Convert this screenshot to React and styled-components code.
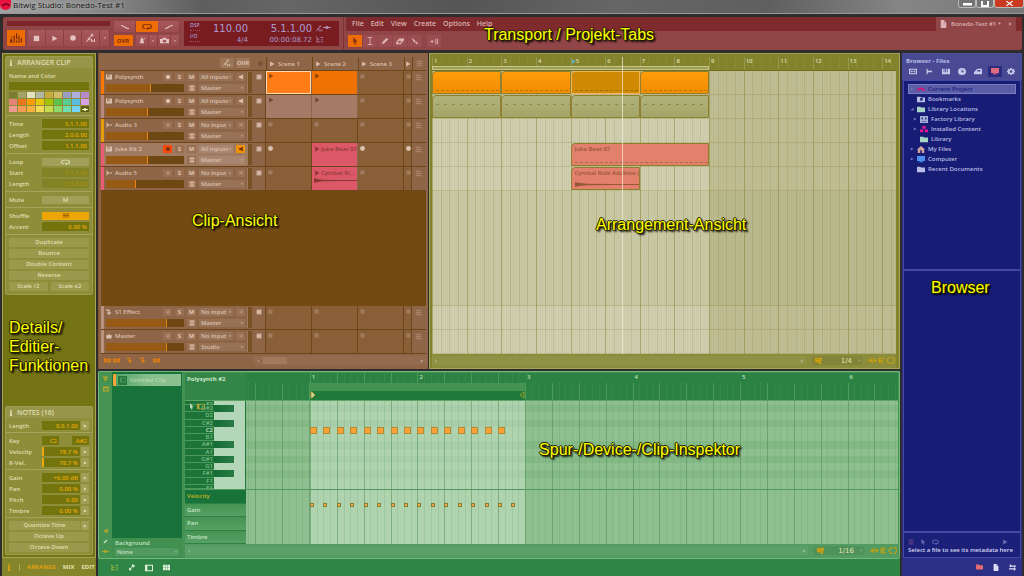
import React from "react";
import styled, { createGlobalStyle, css } from "styled-components";

const BARS = 13.4;

const swatches = [
  "#7c7c34", "#a3a267", "#e3e2c0", "#b0b5a4", "#c8a93c", "#d3bd68", "#999fc4", "#acaedd", "#b98acb",
  "#e5837a", "#e8761c", "#ff9c08", "#e8c80c", "#a4c408", "#5cc24a", "#5acb92", "#58bde0", "#d9a0e8",
  "#ef9b92", "#f79a54", "#fcb13e", "#f3d956", "#c5dc50", "#8bdb6c", "#72dcb0", "#72d3f4", "#5f5f10",
];

const tracks = [
  { name: "Polysynth", icon: "keys", color: "#ff7800", input: "All inputs", output: "Master", level: 58, live: true, clips: [{ color: "#ff7c16", selected: true }, { color: "#f07203" }, null] },
  { name: "Polysynth", icon: "keys", color: "#b98a7d", input: "All inputs", output: "Master", level: 54, live: true, clips: [{ color: "#a37b66" }, { color: "#a37b66" }, null] },
  { name: "Audio 3", icon: "wave", color: "#e69e08", input: "No input", output: "Master", level: 54, clips: [null, null, null] },
  { name: "Juke Kit 2", icon: "keys", color: "#ea5c74", input: "All inputs", output: "Master", level: 54, live: true, armed: true, clips: [null, { color: "#dc5868", name: "Juke Beat 07" }, null] },
  { name: "Audio 5", icon: "wave", color: "#ea5c74", input: "No input", output: "Master", level: 39, clips: [null, { color: "#dc5868", name: "Cymbal Ri...", wave: true }, null] },
];

const busTracks = [
  { name: "S1 Effect", icon: "fx", color: "#bb9180", input: "No input", output: "Master", level: 78, clips: [null, null, null] },
  { name: "Master", icon: "crown", color: "#bb9180", input: "No input", output: "Studio", level: 78, clips: [null, null, null] },
];

const lanes = [
  [
    { from: 1, to: 3, kind: "orange" },
    { from: 3, to: 5, kind: "orange" },
    { from: 5, to: 7, kind: "selected" },
    { from: 7, to: 9, kind: "orange" },
  ],
  [
    { from: 1, to: 3, kind: "olive" },
    { from: 3, to: 5, kind: "olive" },
    { from: 5, to: 7, kind: "olive" },
    { from: 7, to: 9, kind: "olive" },
  ],
  [],
  [{ from: 5, to: 9, kind: "red", name: "Juke Beat 07" }],
  [{ from: 5, to: 7, kind: "red", name: "Cymbal Ride Additive (", wave: true }],
];

const keys = ["E2", "D#2", "D2", "C#2", "C2", "B1", "A#1", "A1", "G#1", "G1", "F#1", "F1", "E1"];

const tree = [
  { name: "Current Project", icon: "project", color: "#d3147c", arrow: "closed", selected: true },
  { name: "Bookmarks", icon: "bookmark", color: "#b9bde6" },
  { name: "Library Locations", icon: "folder", color: "#a8d5c5", arrow: "open" },
  { name: "Factory Library", icon: "factory", color: "#a4b0d8", arrow: "closed", deep: true },
  { name: "Installed Content", icon: "blocks", color: "#ec1596", arrow: "closed", deep: true },
  { name: "Library", icon: "folder", color: "#a8d5c5", deep: true },
  { name: "My Files", icon: "home", color: "#d4a59c", arrow: "closed" },
  { name: "Computer", icon: "screen", color: "#4e8ff0", arrow: "closed" },
  { name: "Recent Documents", icon: "folder", color: "#b9bde6" },
];

const glyphs = {
  stop: <rect x="2" y="2" width="6" height="6" />,
  play: <path d="M2 1l7 4-7 4z" />,
  record: <circle cx="5" cy="5" r="3.5" />,
  down: <path d="M2 3.5h6L5 7z" />,
  left: <path d="M7 2v6L3 5z" />,
  corner: <path d="M9 1v8H1z" />,
  minus: <rect x="0" y="4" width="10" height="5" />,
  keys: <path d="M0 1h2v5h1V1h1v5h1V1h1v5h1V1h1v5h0V1h2v8H0z" />,
  wave: <path d="M1 0l3 4h6v2H4l-3 4z" />,
  fx: <path d="M0 1h6v5h3l-4 4-4-4h3V3H0z" />,
  crown: <path d="M0 3l3 1 2-3 2 3 3-1-1 6H1z" />,
  list: <path d="M1 1h8v2H1zM1 4h8v2H1zM1 7h8v2H1z" />,
  speaker: <path d="M2 3.5h2L8 1v8L4 6.500H2z" />,
  logo: <path d="M0 6h2v3H0zM1 4h1v1H1zM3 3h1v6H3zM5 1h1v5H5zM5 7h1v2H5zM7 3h1v6H7zM9 5h1v4H9z" />,
  fadeOut: <path d="M0 3c4 0 4 4 10 4" fill="none" stroke="currentColor" strokeWidth="1.3" />,
  fadeIn: <path d="M0 7c4 0 4-4 10-4" fill="none" stroke="currentColor" strokeWidth="1.3" />,
  loop: (
    <g>
      <path d="M3.500 8H3Q.7 8 .7 5T3 2h4q2.300 0 2.300 3T7 8H6" fill="none" stroke="currentColor" strokeWidth="1.3" />
      <path d="M6.500 5.500v4.500L4 8z" />
    </g>
  ),
  automation: (
    <g fill="none" stroke="currentColor" strokeWidth="1">
      <path d="M0 9l3-3 3-4" />
      <circle cx="3" cy="6" r="1" />
      <circle cx="6" cy="2" r="1" />
      <path d="M5.500 6v3l1.500-1.500L8.500 9V6" />
    </g>
  ),
  metronome: <path d="M3 1h2l.7 3L8 1l.8.6L6.200 5 7.500 9H1z" />,
  camera: <path d="M0 3h2.500l1-2h3l1 2H10v6H0zM5 4a2 2 0 100 4 2 2 0 000-4z" fillRule="evenodd" />,
  pointer: <path d="M3 0l5 6H5.500l1 3-1.300.5-1.200-3L3 8z" />,
  text: <path d="M2 0h6v1H5.500v8H8v1H2V9h2.500V1H2z" />,
  pen: <path d="M1 9l1-3 5-5 2 2-5 5z" />,
  eraser: <path d="M0 7l4-5h6v2L6 9H0zM2 7l3 .8L7 5.500 4 4.800z" fillRule="evenodd" />,
  knife: <path d="M1 1l4 3v3L3 6zM6 5l3 3-1.500 1L5 7z" />,
  pan: <path d="M0 5l3-2v4zM3 4.500h2v1H3zM6 1h1v8H6zM8 1h1v8H8z" />,
  close: <path d="M1 2l1-1 3 3 3-3 1 1-3 3 3 3-1 1-3-3-3 3-1-1 3-3z" />,
  page: <path d="M1 0h5l3 3v7H1zM6 1v2h2z" fillRule="evenodd" />,
  tag: <path d="M0 1h10v8H0zM1.500 2.500v5h7v-5zM2.500 4h2v2h-2zM5.500 4h2v2h-2z" fillRule="evenodd" />,
  clock: <path d="M5 0a5 5 0 100 10A5 5 0 005 0zM4.400 2h1.200v2.700H7.500V6H4.400z" fillRule="evenodd" />,
  stack: <path d="M0 6l4-5h6v8H0zM4 3v2h4V3z" fillRule="evenodd" />,
  screen: <path d="M0 0h10v7H6v1h2v1H2V8h2V7H0z" />,
  gear: <path d="M4 0h2v1.500l1.200.5L8.400 1 9.500 2.400 8.500 3.600 8.700 4H10v2H8.700l-.3.700 1 1L8 9l-1.200-.8L6 8.500V10H4V8.500L3 8.200 2 9 .8 7.700l.7-1L1.300 6H0V4h1.300l.3-.7-1-1L2 1l1 .8 1-.3zM5 3.300a1.700 1.700 0 100 3.400 1.700 1.700 0 000-3.400z" fillRule="evenodd" />,
  project: <path d="M0 7q0-5 5-5t5 5H8Q8 5 5 5T2 7z" />,
  bookmark: <path d="M0 1h4l1 1h5v7H0zM4 3v4l1.500-1L7 7V3z" fillRule="evenodd" />,
  folder: <path d="M0 1h4l1 1h5v7H0z" />,
  factory: <path d="M0 0h10v10H0zM2 2v3h1.500V2zM6.500 2v3H8V2zM2 7v1h6V7z" fillRule="evenodd" />,
  blocks: <path d="M3 0h4v4H3zM0 5h4v4H0zM6 5h4v4H6z" />,
  home: <path d="M5 0l5 5H9v5H6V6H4v4H1V5H0z" />,
  panel: <path d="M0 1h10v8H0zM3 2.200v5.600h5.800V2.200z" fillRule="evenodd" />,
  grid: <path d="M0 1h3v3.500H0zM3.500 1h3v3.500h-3zM7 1h3v3.500H7zM0 5h3v4H0zM3.500 5h3v4h-3zM7 5h3v4H7z" />,
  clipTool: <path d="M0 1h2v3h3v1H2v3h4v1H0V8h1V2H0zM5 3l5-2v2zM7 5h3v1H7zM7 8h3v1H7z" />,
  device: <path d="M1 7l2-2 1 1 2-3-1-1 2-2 3 3-2 2-1-1-3 3 1 1-2 2z" />,
  swap: <path d="M0 3l3-3v2h7v2H3v1zM10 7l-3-3v2H0v2h7v2z" />,
  snap: <path d="M0 1h10v5H8v2l2 2H5V7H3L2 9 0 6zM2 2.500v1h1v-1zM4.500 2.500v1h1v-1zM7 2.500v1h1v-1z" fillRule="evenodd" />,
  fit: <path d="M0 5l3-3v2h1V1h1v8H4V6H3v2zM10 5L7 2v2H6v2h1v2z" />,
  bracket: <path d="M1 1h8v1.500H3V4h4v2H3v1.500h6V9H1z" />,
  hex: <path d="M3 1h5l2 4-2 4H3L1 5z" fill="none" stroke="currentColor" strokeWidth="1.200" />,
  info: <path d="M3 0h4v2H3zM2.500 3H7v5h1v2H2V8h1V5h-.5z" />,
  layers: <path d="M0 1h10v3H0zM2 5h6v4H2z" />,
  box: <path d="M0 1h10v8H0zM2 4v3h6V4z" fillRule="evenodd" />,
  wires: <path d="M0 4h3l1-2h2l1 2h3v2H7L6 8H4L3 6H0z" />,
};

const Icon = ({ name, size = 6, wide, color }) => (
  <Glyph viewBox="0 0 10 10" $size={size} $wide={wide} $color={color} preserveAspectRatio="none" aria-hidden="true">
    {glyphs[name]}
  </Glyph>
);

const Picker = ({ label, value }) => (
  <PickerWrapper>
    <PickerSelect aria-label={label} defaultValue={value}>
      <option>{value}</option>
    </PickerSelect>
    <PickerArrow>
      <Icon name="down" size={4} />
    </PickerArrow>
  </PickerWrapper>
);

const Param = ({ label, value, dim, arrow, bar }) => (
  <ParamRow>
    <span>{label}</span>
    <ParamInput aria-label={label} defaultValue={value} $dim={dim} $bar={bar} />
    {arrow && (
      <ArrowButton aria-label={`${label} options`}>
        <Icon name="play" size={4} />
      </ArrowButton>
    )}
  </ParamRow>
);

const Transport = () => (
  <TransportBar>
    <TransportPanel>
      <Stack>
        <Progress />
        <ButtonRow>
          <TransportButton $active aria-label="Dashboard"><Icon name="logo" size={12} /></TransportButton>
          <Spacer />
          <TransportButton aria-label="Stop"><Icon name="stop" size={9} /></TransportButton>
          <TransportButton aria-label="Play"><Icon name="play" size={7} /></TransportButton>
          <TransportButton aria-label="Record"><Icon name="record" size={8} /></TransportButton>
          <TransportButton aria-label="Automation"><Icon name="automation" size={10} /></TransportButton>
          <TransportButton $narrow aria-label="Automation menu"><Icon name="down" size={4} /></TransportButton>
        </ButtonRow>
      </Stack>
      <Stack>
        <ButtonRow>
          <SmallButton $width={22} aria-label="Punch in"><Icon name="fadeOut" size={8} /></SmallButton>
          <SmallButton $width={22} $active aria-label="Loop"><Icon name="loop" size={7} wide={10} /></SmallButton>
          <SmallButton $width={22} aria-label="Punch out"><Icon name="fadeIn" size={8} /></SmallButton>
        </ButtonRow>
        <ButtonRow>
          <SmallButton $width={19} $active>OVR</SmallButton>
          <Spacer />
          <SmallButton $width={13} aria-label="Metronome"><Icon name="metronome" size={7} /></SmallButton>
          <SmallButton $width={9} aria-label="Metronome menu"><Icon name="down" size={4} /></SmallButton>
          <SmallButton $width={13} aria-label="Snapshot"><Icon name="camera" size={7} wide={9} /></SmallButton>
          <SmallButton $width={9} aria-label="Snapshot menu"><Icon name="down" size={4} /></SmallButton>
        </ButtonRow>
      </Stack>
      <Display>
        <Meters>
          <MeterLine>DSP</MeterLine>
          <MeterLine>I/O</MeterLine>
        </Meters>
        <Readout $width={44}>
          <Big>110.00</Big>
          <Small>4/4</Small>
        </Readout>
        <Readout $width={60}>
          <Big>5.1.1.00</Big>
          <Small>00:00:08.72</Small>
        </Readout>
        <DisplayIcons>
          <Icon name="automation" size={7} />
          <Icon name="wires" size={5} wide={8} />
          <Icon name="clipTool" size={7} />
        </DisplayIcons>
      </Display>
    </TransportPanel>
    <MenuPanel>
      <MenuStrip>
        <Menu>
          {["File", "Edit", "View", "Create", "Options", "Help"].map((item) => (
            <MenuItem key={item}>{item}</MenuItem>
          ))}
        </Menu>
        <Tab>
          <Icon name="page" size={8} wide={7} />
          Bonedo-Test #1 *
          <TabClose aria-label="Close project"><Icon name="close" size={4} /></TabClose>
        </Tab>
      </MenuStrip>
      <Tools>
        {["pointer", "text", "pen", "eraser", "knife"].map((tool, i) => (
          <ToolButton key={tool} $active={i === 0} aria-label={tool}>
            <Icon name={tool} size={8} />
          </ToolButton>
        ))}
        <ToolButton aria-label="Follow playback"><Icon name="pan" size={7} wide={9} /></ToolButton>
      </Tools>
    </MenuPanel>
    <Caption $top={8} $left="47.2%">Transport / Projekt-Tabs</Caption>
  </TransportBar>
);

const Inspector = () => (
  <InspectorColumn>
    <InspectorBody>
      <Card>
        <CardTitle><Icon name="info" size={6} wide={4} />ARRANGER CLIP</CardTitle>
        <Section $first>
          <ParamRow as="label" htmlFor="clip-name">Name and Color</ParamRow>
          <NameInput id="clip-name" />
          <Palette>
            {swatches.map((color, i) => (
              <Swatch key={i} $color={color} aria-label={`Color ${i + 1}`}>
                {i === swatches.length - 1 && <Icon name="wires" size={5} wide={6} color="#f4f4d0" />}
              </Swatch>
            ))}
          </Palette>
        </Section>
        <Section>
          <Param label="Time" value="5.1.1.00" />
          <Param label="Length" value="2.0.0.00" />
          <Param label="Offset" value="1.1.1.00" />
        </Section>
        <Section>
          <ParamRow><span>Loop</span><ValueButton aria-label="Loop"><Icon name="loop" size={6} wide={9} /></ValueButton></ParamRow>
          <Param label="Start" value="1.1.1.00" dim />
          <Param label="Length" value="2.0.0.00" dim />
        </Section>
        <Section>
          <ParamRow><span>Mute</span><ValueButton>M</ValueButton></ParamRow>
        </Section>
        <Section>
          <ParamRow><span>Shuffle</span><ValueButton $active aria-label="Shuffle"><Icon name="list" size={5} wide={8} color="#9f6b05" /></ValueButton></ParamRow>
          <Param label="Accent" value="0.00 %" />
        </Section>
        <Section>
          {["Duplicate", "Bounce", "Double Content", "Reverse"].map((name) => (
            <WideButton key={name}>{name}</WideButton>
          ))}
          <ButtonRow>
            <WideButton>Scale /2</WideButton>
            <Spacer />
            <WideButton>Scale x2</WideButton>
          </ButtonRow>
        </Section>
      </Card>
      <Card>
        <CardTitle><Icon name="info" size={6} wide={4} />NOTES (16)</CardTitle>
        <Section $first $tight>
          <Param label="Length" value="0.0.1.00" arrow />
        </Section>
        <Section $tight>
          <ParamRow>
            <span>Key</span>
            <KeyInput aria-label="Lowest key" defaultValue="C2" />
            <Spacer $grow />
            <KeyInput aria-label="Highest key" defaultValue="A#2" />
          </ParamRow>
          <Param label="Velocity" value="78.7 %" arrow bar />
          <Param label="R-Vel." value="78.7 %" arrow bar />
        </Section>
        <Section $tight>
          <Param label="Gain" value="+0.00 dB" arrow />
          <Param label="Pan" value="0.00 %" arrow />
          <Param label="Pitch" value="0.00" arrow />
          <Param label="Timbre" value="0.00 %" arrow />
        </Section>
        <Section $tight>
          <ButtonRow>
            <WideButton>Quantize Time</WideButton>
            <ArrowButton aria-label="Quantize options"><Icon name="play" size={4} /></ArrowButton>
          </ButtonRow>
          <WideButton>Octave Up</WideButton>
          <WideButton>Octave Down</WideButton>
        </Section>
      </Card>
    </InspectorBody>
    <ViewBar>
      <ViewInfo aria-label="Info"><Icon name="info" size={7} wide={4} /></ViewInfo>
      <ViewButton $active>ARRANGE</ViewButton>
      <ViewButton>MIX</ViewButton>
      <ViewButton>EDIT</ViewButton>
    </ViewBar>
    <Caption $top={265} $left="7px">
      Details/
      <br />
      Editier-
      <br />
      Funktionen
    </Caption>
  </InspectorColumn>
);

const Track = ({ track }) => (
  <TrackRow>
    <TrackColor $color={track.color} />
    <TrackHeader $selected={track.armed}>
      <TrackLine>
        <Icon name={track.icon} size={6} />
        <TrackName>{track.name}</TrackName>
        <TinyButton $armed={track.armed} $dim={!track.live} aria-label="Record arm"><Icon name="record" size={6} /></TinyButton>
        <TinyButton>S</TinyButton>
        <TinyButton>M</TinyButton>
        <Picker label={`${track.name} input`} value={track.input} />
        <TinyButton $monitor={track.armed} $dim={!track.live} aria-label="Monitor"><Icon name="speaker" size={6} /></TinyButton>
      </TrackLine>
      <TrackLine>
        <Fader><FaderFill style={{ width: `${track.level}%` }} /></Fader>
        <TinyButton aria-label="Routing"><Icon name="list" size={6} /></TinyButton>
        <Picker label={`${track.name} output`} value={track.output} />
      </TrackLine>
    </TrackHeader>
    <LevelMeter />
    <Slots>
      <StopSlot aria-label="Stop clips"><Icon name="stop" size={8} /></StopSlot>
      {track.clips.map((clip, i) =>
        clip ? (
          <ClipSlot key={i} $color={clip.color} $selected={clip.selected}>
            <ClipHead><Icon name="play" size={6} />{clip.name && <ClipText>{clip.name}</ClipText>}</ClipHead>
            {clip.wave && <WaveLine />}
          </ClipSlot>
        ) : (
          <EmptySlot key={i} $armed={track.armed}><Icon name={track.armed ? "record" : "stop"} size={7} /></EmptySlot>
        )
      )}
      <EmptySlot $armed={track.armed}><Icon name={track.armed ? "record" : "stop"} size={7} /></EmptySlot>
      <MenuSlot><Icon name="list" size={7} /></MenuSlot>
    </Slots>
  </TrackRow>
);

const Launcher = () => (
  <LauncherPanel>
    <LauncherHeader>
      <HeaderTools>
        <HeaderButton aria-label="Automation"><Icon name="automation" size={8} /></HeaderButton>
        <HeaderButton>OVR</HeaderButton>
      </HeaderTools>
      <Slots>
        <StopHead><Icon name="stop" size={7} /></StopHead>
        {["Scene 1", "Scene 2", "Scene 3"].map((scene) => (
          <SceneButton key={scene}><Icon name="play" size={6} />{scene}</SceneButton>
        ))}
        <SceneButton $last aria-label="Next scene"><Icon name="play" size={6} /></SceneButton>
        <MenuSlot><Icon name="list" size={7} /></MenuSlot>
      </Slots>
    </LauncherHeader>
    {tracks.map((track, i) => <Track key={i} track={track} />)}
    <EmptyTracks />
    {busTracks.map((track) => <Track key={track.name} track={track} />)}
    <LauncherFooter>
      <FooterIcons>
        <Icon name="grid" size={5} wide={7} />
        <Icon name="grid" size={5} wide={7} />
        <Spacer />
        <Icon name="fx" size={6} />
        <Spacer />
        <Icon name="fx" size={6} />
        <Spacer />
        <Icon name="grid" size={5} wide={7} />
      </FooterIcons>
      <ScrollTrack>
        <Icon name="left" size={4} />
        <ScrollThumb />
        <Spacer $grow />
        <Icon name="play" size={4} />
      </ScrollTrack>
    </LauncherFooter>
    <Caption $top={158} $left="93px">Clip-Ansicht</Caption>
  </LauncherPanel>
);

const ZoomBar = ({ grid }) => (
  <ZoomRow>
    <ScrollTrack>
      <Icon name="left" size={4} />
      <Spacer $grow />
      <Icon name="play" size={4} />
    </ScrollTrack>
    <ZoomGroup>
      <Icon name="snap" size={7} />
      <GridValue>{grid}</GridValue>
      <Dim><Icon name="down" size={5} /></Dim>
    </ZoomGroup>
    <ZoomIcons>
      <Icon name="fit" size={7} wide={9} />
      <Icon name="bracket" size={7} />
      <Icon name="hex" size={7} wide={9} />
    </ZoomIcons>
  </ZoomRow>
);

const Arrangement = () => (
  <ArrangerPanel>
    <ArrangerBody>
      <Ruler>
        {Array.from({ length: 14 }, (_, i) => (
          <RulerMark key={i} $cue={i === 4}>{i === 4 && <Icon name="play" size={5} color="#55b5e0" />}{i + 1}</RulerMark>
        ))}
        <LoopRegion />
      </Ruler>
      <Lanes>
        {lanes.map((clips, i) => (
          <Lane key={i}>
            {clips.map((clip) => (
              <TimelineClip key={clip.from} $from={clip.from} $to={clip.to} $kind={clip.kind}>
                {clip.name && <ClipText>{clip.name}</ClipText>}
                {clip.wave ? <WaveLine $long /> : <NoteDashes $top={clip.kind === "olive"} />}
              </TimelineClip>
            ))}
          </Lane>
        ))}
        <EmptyLane />
        <Lane />
        <Lane />
      </Lanes>
      <Playhead />
    </ArrangerBody>
    <ZoomBar grid="1/4" />
    <Caption $top={161} $left="35.4%">Arrangement-Ansicht</Caption>
  </ArrangerPanel>
);

const NoteEditor = () => (
  <EditorPanel>
    <EditorMain>
      <EditorStrip>
        <Icon name="layers" size={5} />
        <Icon name="box" size={6} />
        <Spacer $grow />
        <Icon name="speaker" size={6} />
        <Icon name="pen" size={5} color="#bfe0c0" />
        <Icon name="wires" size={5} wide={7} />
      </EditorStrip>
      <ClipList>
        <ClipListItem><ClipListIcon><Icon name="panel" size={6} /></ClipListIcon>Untitled Clip</ClipListItem>
        <Spacer $grow />
        <Background>
          <span>Background</span>
          <Picker label="Background" value="None" />
        </Background>
      </ClipList>
      <EditorCanvas>
        <EditorTop>
          <EditorTitle>Polysynth #2</EditorTitle>
          <NoteRuler>
            <RulerPart $beats={19 / 8} $flip />
            <RulerPart $beats={8} $loop>
              <BarNumber>1</BarNumber>
              <BarNumber>2</BarNumber>
              <LoopStart viewBox="0 0 6 8"><path d="M1 1h1l3 3-3 3H1z" fill="#b9dca8" stroke="#c79a36" /></LoopStart>
              <LoopEnd viewBox="0 0 6 8"><path d="M5 1L1 4l4 3z" fill="none" stroke="#9a9a32" /></LoopEnd>
            </RulerPart>
            <RulerPart $beats={111 / 8}>
              <BarNumber>3</BarNumber>
              <BarNumber>4</BarNumber>
              <BarNumber>5</BarNumber>
              <BarNumber>6</BarNumber>
            </RulerPart>
          </NoteRuler>
        </EditorTop>
        <EditorNotes>
          <Keyboard>
            <KeyTools><Icon name="pointer" size={7} /><Icon name="panel" size={7} wide={8} color="#b0a32e" /></KeyTools>
            {keys.map((key) => (
              <KeyRow key={key} $c={key === "C2"}>
                <KeyLabel>{key}</KeyLabel>
                <PianoKey>{key.includes("#") && <BlackKey />}</PianoKey>
              </KeyRow>
            ))}
          </Keyboard>
          <NoteGrid>
            <Stripes>
              {keys.map((key) => <Stripe key={key} $dark={key.includes("#")} />)}
            </Stripes>
            <GridPart $beats={19 / 8} $flip />
            <GridPart $beats={8} $loop>
              {keys.map((key) => (
                <NoteRow key={key}>
                  {key === "C2" && Array.from({ length: 15 }, (_, i) => <Note key={i} />)}
                </NoteRow>
              ))}
            </GridPart>
            <GridPart $beats={111 / 8} />
          </NoteGrid>
        </EditorNotes>
        <EditorLanes>
          <LaneTabs>
            {["Velocity", "Gain", "Pan", "Timbre"].map((lane, i) => (
              <LaneTab key={lane} $active={i === 0}>{lane}</LaneTab>
            ))}
          </LaneTabs>
          <NoteGrid>
            <GridPart $beats={19 / 8} $flip />
            <GridPart $beats={8} $loop>
              <VelocityRow>
                {Array.from({ length: 16 }, (_, i) => <Velocity key={i} />)}
              </VelocityRow>
            </GridPart>
            <GridPart $beats={111 / 8} />
          </NoteGrid>
        </EditorLanes>
        <ZoomBar grid="1/16" />
      </EditorCanvas>
    </EditorMain>
    <EditorFooter>
      <Icon name="clipTool" size={7} color="#aec648" />
      <Icon name="device" size={7} />
      <Icon name="panel" size={8} />
      <Icon name="grid" size={7} />
    </EditorFooter>
    <Caption $top={69} $left="55%">Spur-/Device-/Clip-Inspektor</Caption>
  </EditorPanel>
);

const Browser = () => (
  <BrowserColumn>
    <BrowserHeader>
      Browser - Files
      <BrowserTabs>
        {["tag", "wave", "keys", "clock", "stack", "screen", "gear"].map((name) => (
          <BrowserTab key={name} $active={name === "screen"} aria-label={name}>
            <Icon name={name} size={7} wide={name === "wave" ? 6 : 8} />
          </BrowserTab>
        ))}
      </BrowserTabs>
    </BrowserHeader>
    <Tree>
      {tree.map((item) => (
        <TreeItem key={item.name} $selected={item.selected} $deep={item.deep}>
          <TreeArrow>{item.arrow && <Icon name={item.arrow === "open" ? "corner" : "play"} size={4} />}</TreeArrow>
          <Icon name={item.icon} size={7} wide={8} color={item.color} />
          {item.name}
        </TreeItem>
      ))}
    </Tree>
    <Results />
    <MetaPanel>
      <MetaIcons>
        <Icon name="list" size={6} color="#663c85" />
        <Icon name="pointer" size={6} wide={8} />
        <Icon name="loop" size={6} wide={7} />
        <Spacer $grow />
        <Icon name="play" size={6} />
      </MetaIcons>
      Select a file to see its metadata here
    </MetaPanel>
    <BrowserFooter>
      <Icon name="folder" size={6} wide={7} color="#e06a70" />
      <Icon name="page" size={7} wide={6} />
      <Icon name="swap" size={7} />
    </BrowserFooter>
    <Caption $top={225} $left="29px">Browser</Caption>
  </BrowserColumn>
);

export default function App() {
  return (
    <Window>
      <GlobalStyle />
      <TitleBar>
        <AppBadge><Icon name="project" size={6} wide={8} /></AppBadge>
        Bitwig Studio: Bonedo-Test #1
        <Spacer $grow />
        <WindowButtons>
          <WindowButton aria-label="Minimize"><Icon name="minus" size={5} wide={9} /></WindowButton>
          <WindowButton aria-label="Maximize"><MaxBox /></WindowButton>
          <WindowButton $close aria-label="Close"><Icon name="close" size={7} wide={9} /></WindowButton>
        </WindowButtons>
      </TitleBar>
      <Transport />
      <Workspace>
        <Inspector />
        <Center>
          <Upper>
            <Launcher />
            <Arrangement />
          </Upper>
          <NoteEditor />
        </Center>
        <Browser />
      </Workspace>
    </Window>
  );
}

const GlobalStyle = createGlobalStyle`
  * {
    box-sizing: border-box;
  }
  body {
    margin: 0;
    background: #2e2c2c;
    font-family: "Open Sans", "Noto Sans", sans-serif;
    font-size: 6px;
    font-weight: 600;
    line-height: 8px;
  }
  button, input, select {
    margin: 0;
    padding: 0;
    border: 0;
    border-radius: 0;
    font: inherit;
    color: inherit;
    background: none;
  }
`;

const flexCenter = css`
  display: flex;
  align-items: center;
  justify-content: center;
`;

const Glyph = styled.svg`
  flex: none;
  display: block;
  width: ${(p) => p.$wide || p.$size}px;
  height: ${(p) => p.$size}px;
  color: ${(p) => p.$color || "inherit"};
  fill: currentColor;
`;

const Spacer = styled.span`
  flex: ${(p) => (p.$grow ? "1" : "0 0 3px")};
`;

const Caption = styled.div`
  position: absolute;
  top: ${(p) => p.$top}px;
  left: ${(p) => p.$left};
  z-index: 5;
  color: #ffff00;
  font-family: "Liberation Sans", Arial, sans-serif;
  font-size: 16px;
  font-weight: 400;
  line-height: 19px;
  white-space: nowrap;
  text-shadow: 1px 0 #222200, -1px 0 #222200, 0 1px #222200, 0 -1px #222200, 1px 1px 2px #000000, 2px 2px 2px #000000;
`;

const Window = styled.div`
  min-height: 100vh;
  display: flex;
  flex-direction: column;
  overflow: hidden;
`;

const TitleBar = styled.header`
  display: flex;
  align-items: center;
  gap: 2px;
  height: 14px;
  border-bottom: 1px solid #989898;
  padding-bottom: 4px;
  color: #161616;
  font-size: 8px;
  font-weight: 400;
  line-height: 10px;
  text-shadow: 0 0 4px #d0d0d0;
  background: linear-gradient(90deg, #a2a2a2, #808080 12%, #5e5e5e 20%, #666666 28%, #555555 45%, #666666 60%, #5f5f5f 75%, #858585 88%, #787878);
`;

const AppBadge = styled.span`
  ${flexCenter}
  width: 11px;
  height: 10px;
  border-radius: 0 0 5px 5px;
  color: #7a0020;
  background: #e8133c;
`;

const WindowButtons = styled.div`
  align-self: flex-start;
  display: flex;
`;

const WindowButton = styled.button`
  ${flexCenter}
  width: ${(p) => (p.$close ? 30 : 18)}px;
  height: 8px;
  border: 1px solid #b9b9b9;
  border-top: 0;
  border-radius: 0 0 3px 3px;
  color: #ffffff;
  background: ${(p) => (p.$close ? "#c93a1e" : "#747474")};
`;

const MaxBox = styled.span`
  width: 8px;
  height: 6px;
  border: 2px solid #ffffff;
  border-top: 0;
`;

const TransportBar = styled.section`
  position: relative;
  display: flex;
  height: 33px;
  margin: 3px 2px 3px 3px;
  border-radius: 2px;
  color: #dcb2b2;
  background: #904547;
`;

const TransportPanel = styled.div`
  display: flex;
  gap: 4px;
  padding: 4px;
  border-right: 1px solid #7c3032;
`;

const Stack = styled.div`
  display: flex;
  flex-direction: column;
  justify-content: space-between;
`;

const Progress = styled.div`
  height: 5px;
  background: #7b2528;
`;

const ButtonRow = styled.div`
  display: flex;
`;

const button = css`
  ${flexCenter}
  color: ${(p) => (p.$active ? "#7c3008" : "#e4c2c0")};
  border-right: 1px solid ${(p) => (p.$active ? "#ee6c04" : "#8a3f42")};
  background: ${(p) => (p.$active ? "#ee6c04" : "linear-gradient(#a8585b, #9a4c4f)")};
`;

const TransportButton = styled.button`
  ${button}
  width: ${(p) => (p.$narrow ? 10 : 18)}px;
  height: 16px;
`;

const SmallButton = styled.button`
  ${button}
  width: ${(p) => p.$width}px;
  height: 11px;
  font-weight: 700;
`;

const Display = styled.div`
  display: flex;
  gap: 4px;
  width: 155px;
  padding: 1px 6px;
  color: #a99bd0;
  background: #791c20;
`;

const Meters = styled.div`
  display: flex;
  flex-direction: column;
  gap: 2px;
  width: 10px;
`;

const MeterLine = styled.span`
  height: 9px;
  font-size: 5px;
  line-height: 7px;
  border-bottom: 1px dotted #96506c;
`;

const Readout = styled.div`
  display: flex;
  flex: none;
  flex-direction: column;
  justify-content: space-between;
  align-items: flex-end;
  width: ${(p) => p.$width}px;
  font-family: "DejaVu Sans", sans-serif;
  font-weight: 400;
  white-space: nowrap;
`;

const Big = styled.span`
  font-size: 10px;
  line-height: 13px;
`;

const Small = styled.span`
  font-size: 7px;
  line-height: 9px;
`;

const DisplayIcons = styled.div`
  display: flex;
  flex: none;
  flex-wrap: wrap;
  align-content: space-between;
  width: 16px;
  padding: 3px 0 2px;
  color: #b58ab0;
`;

const MenuPanel = styled.div`
  flex: 1;
  display: flex;
  flex-direction: column;
  padding-left: 2px;
`;

const MenuStrip = styled.div`
  display: flex;
  height: 14px;
  padding-right: 6px;
  background: #7f2a2d;
`;

const Menu = styled.nav`
  flex: 1;
  display: flex;
  align-items: center;
  gap: 7px;
  padding-left: 6px;
`;

const MenuItem = styled.button`
  font-size: 7px;
`;

const Tab = styled.div`
  display: flex;
  align-items: center;
  gap: 4px;
  width: 80px;
  padding: 0 4px;
  white-space: nowrap;
  background: #904547;
`;

const TabClose = styled.button`
  margin-left: auto;
`;

const Tools = styled.div`
  display: flex;
  gap: 1px;
  padding: 4px 0 0 2px;
`;

const ToolButton = styled.button`
  ${flexCenter}
  width: 14px;
  height: 12px;
  color: ${(p) => (p.$active ? "#7c3008" : "#dcb4b2")};
  background: ${(p) => (p.$active ? "#ee6c04" : "#9b4e51")};
  &:last-child {
    margin-left: 4px;
  }
`;

const Workspace = styled.main`
  flex: 1;
  display: flex;
  gap: 2px;
  padding: 0 2px;
`;

const InspectorColumn = styled.aside`
  position: relative;
  flex: none;
  display: flex;
  flex-direction: column;
  width: 94px;
  color: #e0deb0;
  background: #85852c;
`;

const InspectorBody = styled.div`
  flex: 1;
  display: flex;
  flex-direction: column;
  justify-content: space-between;
  padding: 2px;
  border: 1px solid #a3a35c;
  background: #747414;
`;

const Card = styled.div`
  border: 1px solid #9d9c50;
  border-radius: 2px;
  background: #8e8d3a;
`;

const CardTitle = styled.h2`
  display: flex;
  align-items: center;
  gap: 4px;
  height: 11px;
  margin: 0;
  padding: 0 3px;
  font-size: 7px;
  font-weight: 600;
  background: #96954a;
`;

const Section = styled.div`
  display: flex;
  flex-direction: column;
  gap: 2px;
  padding: 3px 3px ${(p) => (p.$tight ? 2 : 3)}px;
  border-top: ${(p) => (p.$first ? "0" : "1px solid #a5a45c")};
`;

const ParamRow = styled.div`
  display: flex;
  align-items: center;
  height: 9px;
  span:first-child {
    width: 33px;
  }
`;

const field = css`
  height: 9px;
  color: ${(p) => (p.$dim ? "#a98f10" : "#e2a808")};
  text-align: right;
  background: ${(p) => (p.$dim ? "#828226" : "#74740e")};
`;

const ParamInput = styled.input`
  ${field}
  flex: 1;
  min-width: 0;
  padding-right: 2px;
  border-left: ${(p) => (p.$bar ? "2px solid #e9a80c" : "0")};
`;

const KeyInput = styled.input`
  ${field}
  width: 17px;
  padding-right: 2px;
`;

const ArrowButton = styled.button`
  ${flexCenter}
  width: 8px;
  height: 9px;
  margin-left: 1px;
  background: #a09f55;
`;

const NameInput = styled.input`
  height: 8px;
  background: #74740e;
`;

const Palette = styled.div`
  display: grid;
  grid-template-columns: repeat(9, 1fr);
  gap: 1px;
`;

const Swatch = styled.button`
  ${flexCenter}
  height: 6px;
  background: ${(p) => p.$color};
`;

const ValueButton = styled.button`
  ${flexCenter}
  flex: 1;
  height: 8px;
  background: ${(p) => (p.$active ? "#eea508" : "#a1a058")};
`;

const WideButton = styled.button`
  flex: 1 0 9px;
  height: 9px;
  line-height: 9px;
  background: #9a994c;
`;

const ViewBar = styled.div`
  display: flex;
  align-items: center;
  gap: 7px;
  height: 18px;
  padding-left: 5px;
`;

const ViewInfo = styled.button`
  padding-right: 8px;
  border-right: 1px solid #aaa95e;
  color: #e0a00c;
`;

const ViewButton = styled.button`
  font-weight: 700;
  color: ${(p) => (p.$active ? "#e0a00c" : "#e4e2b4")};
`;

const Center = styled.div`
  flex: 1;
  min-width: 0;
  display: flex;
  flex-direction: column;
  gap: 2px;
`;

const Upper = styled.div`
  flex: 1;
  display: flex;
`;

const LauncherPanel = styled.section`
  position: relative;
  flex: none;
  display: flex;
  flex-direction: column;
  width: 330px;
  padding: 4px 2px 0 2px;
  border: 1px solid #82562f;
  border-width: 0 0 0 1px;
  color: #dac0ae;
  background: #8e6546;
`;

const LauncherHeader = styled.div`
  display: flex;
  height: 14px;
  border-bottom: 1px solid #6c4519;
`;

const HeaderTools = styled.div`
  display: flex;
  justify-content: flex-end;
  gap: 2px;
  width: 153px;
  padding: 1px 4px 2px 0;
`;

const HeaderButton = styled.button`
  ${flexCenter}
  width: 14px;
  font-weight: 700;
  background: #9d7658;
`;

const Slots = styled.div`
  flex: 1;
  display: grid;
  grid-template-columns: 13px repeat(3, minmax(0, 46px)) 8px 12px;
`;

const slot = css`
  border-right: 1px solid #6c4519;
`;

const StopHead = styled.div`
  ${slot}
  ${flexCenter}
  color: #785034;
`;

const SceneButton = styled.button`
  ${slot}
  display: flex;
  align-items: center;
  gap: 3px;
  padding-left: ${(p) => (p.$last ? 0 : 2)}px;
  overflow: hidden;
`;

const TrackRow = styled.div`
  display: flex;
  height: 24px;
  border-bottom: 1px solid #6c4519;
`;

const TrackColor = styled.span`
  width: 3px;
  background: ${(p) => p.$color};
`;

const TrackHeader = styled.div`
  display: flex;
  flex-direction: column;
  gap: 2px;
  width: 143px;
  padding: 1px 2px;
  background: ${(p) => (p.$selected ? "#a17a62" : "#8e6546")};
`;

const TrackLine = styled.div`
  display: flex;
  align-items: center;
  gap: 3px;
  height: 9px;
`;

const TrackName = styled.span`
  flex: 1;
  white-space: nowrap;
`;

const TinyButton = styled.button`
  ${flexCenter}
  width: 9px;
  height: 8px;
  font-weight: 700;
  color: ${(p) => (p.$armed || p.$monitor ? "#7a3210" : p.$dim ? "#b08a78" : "#e0c6b6")};
  background: ${(p) => (p.$armed ? "#f8480a" : p.$monitor ? "#f09206" : "#996f51")};
`;

const PickerWrapper = styled.span`
  position: relative;
  display: flex;
  flex: none;
  width: 46px;
  ${TrackLine}:first-child & {
    width: 34px;
  }
`;

const PickerSelect = styled.select`
  appearance: none;
  width: 100%;
  height: 8px;
  padding-left: 2px;
  border: 0;
  line-height: 8px;
  background: rgba(255, 255, 255, 0.09);
`;

const PickerArrow = styled.span`
  position: absolute;
  top: 2px;
  right: 1px;
  pointer-events: none;
`;

const Fader = styled.div`
  flex: 1;
  height: 8px;
  background: #6f4713;
`;

const FaderFill = styled.div`
  height: 8px;
  border-right: 1px solid #e08413;
  background: #975a14;
`;

const LevelMeter = styled.span`
  width: 5px;
  margin: 1px 1px 1px 0;
  border-left: 1px solid #a07a5c;
  background: #785023;
`;

const StopSlot = styled.button`
  ${slot}
  display: flex;
  justify-content: center;
  padding-top: 2px;
  color: #d2b4a4;
`;

const EmptySlot = styled.div`
  ${slot}
  padding: 2px 0 0 1px;
  overflow: hidden;
  color: ${(p) => (p.$armed ? "#dcc0b0" : "#a07b5f")};
  background: #885f36;
`;

const ClipSlot = styled.div`
  margin-right: 1px;
  padding: 1px 0 1px 1px;
  border: 1px solid ${(p) => (p.$selected ? "#ffd9b8" : p.$color)};
  border-right-width: ${(p) => (p.$selected ? 1 : 0)}px;
  color: rgba(90, 40, 15, 0.65);
  overflow: hidden;
  background: ${(p) => p.$color};
`;

const ClipHead = styled.div`
  display: flex;
  align-items: center;
  gap: 1px;
`;

const ClipText = styled.span`
  flex: 1;
  overflow: hidden;
  white-space: nowrap;
`;

const WaveLine = styled.div`
  height: 5px;
  margin-top: ${(p) => (p.$long ? 3 : 1)}px;
  background: currentColor;
  clip-path: polygon(0 0, 8% 20%, 20% 35%, 60% 40%, 100% 40%, 100% 60%, 60% 60%, 20% 65%, 8% 80%, 0 100%);
`;

const MenuSlot = styled.div`
  display: flex;
  justify-content: center;
  padding-top: 3px;
  color: #a88368;
`;

const EmptyTracks = styled.div`
  flex: 1;
  background: #734b12;
`;

const LauncherFooter = styled.div`
  display: flex;
  align-items: flex-start;
  height: 15px;
  padding-top: 2px;
`;

const FooterIcons = styled.div`
  display: flex;
  align-items: center;
  gap: 2px;
  width: 153px;
  height: 8px;
  padding-left: 3px;
  color: #df8010;
`;

const ScrollTrack = styled.div`
  flex: 1;
  display: flex;
  align-items: center;
  gap: 3px;
  height: 9px;
  padding: 0 2px;
  color: rgba(255, 255, 255, 0.35);
  background: rgba(255, 255, 255, 0.05);
`;

const ScrollThumb = styled.span`
  width: 24px;
  height: 7px;
  background: #a17a5e;
`;

const ArrangerPanel = styled.section`
  position: relative;
  flex: 1;
  min-width: 0;
  display: flex;
  flex-direction: column;
  margin-left: 1px;
  padding: 3px 3px 0 2px;
  border: 1px solid #a3a45a;
  background: #83832d;
`;

const ArrangerBody = styled.div`
  position: relative;
  flex: 1;
  display: flex;
  flex-direction: column;
`;

const bars = (steps, color) =>
  `repeating-linear-gradient(90deg, ${color} 0 1px, transparent 1px calc(100% / ${BARS * steps}))`;

const Ruler = styled.div`
  position: relative;
  display: grid;
  grid-template-columns: repeat(13, minmax(0, 5fr)) minmax(0, 2fr);
  height: 14px;
  border-bottom: 1px solid #6e6e1c;
  background: ${bars(1, "#97974a")}, ${bars(4, "rgba(150, 150, 70, 0.4)")};
`;

const RulerMark = styled.span`
  display: flex;
  align-items: center;
  height: 8px;
  padding-left: ${(p) => (p.$cue ? 0 : 2)}px;
  color: #dddcb0;
`;

const LoopRegion = styled.span`
  position: absolute;
  top: 9px;
  left: 0;
  width: calc(100% * 8 / ${BARS});
  height: 4px;
  border: 1px solid #c5c58c;
  background: #9c9c52;
`;

const Lanes = styled.div`
  flex: 1;
  display: flex;
  flex-direction: column;
  background:
    ${bars(1, "rgba(130, 130, 50, 0.4)")},
    ${bars(4, "rgba(130, 130, 50, 0.16)")},
    ${bars(16, "rgba(130, 130, 50, 0.05)")},
    linear-gradient(90deg, #cfceae calc(100% * 8 / ${BARS}), #bfbd93 0);
`;

const Lane = styled.div`
  display: grid;
  grid-template-columns: repeat(13, minmax(0, 5fr)) minmax(0, 2fr);
  height: 24px;
  border-bottom: 1px solid rgba(130, 130, 50, 0.25);
`;

const EmptyLane = styled.div`
  flex: 1;
  border-bottom: 1px solid rgba(130, 130, 50, 0.25);
  background: ${bars(4, "rgba(140, 140, 70, 0.12)")}, rgba(150, 150, 90, 0.1);
`;

const clipColors = {
  orange: "linear-gradient(#ff9d0a, #f28c02)",
  selected: "#cf8903",
  olive: "linear-gradient(#b1b17c, #a4a568)",
  red: "#e3806c",
};

const TimelineClip = styled.div`
  display: flex;
  flex-direction: column;
  justify-content: space-between;
  grid-column: ${(p) => p.$from} / ${(p) => p.$to};
  padding: 1px 0 2px 3px;
  border: 1px solid ${(p) => (p.$kind === "selected" ? "#f3b351" : "#8e8030")};
  border-top-left-radius: 4px;
  color: #975636;
  overflow: hidden;
  background: ${(p) => clipColors[p.$kind]};
`;

const NoteDashes = styled.div`
  height: 1px;
  margin-top: ${(p) => (p.$top ? "7px" : "auto")};
  margin-bottom: ${(p) => (p.$top ? "auto" : "0")};
  background: repeating-linear-gradient(90deg, rgba(90, 90, 20, 0.4) 0 3px, transparent 3px ${(p) => (p.$top ? 8 : 5)}px);
`;

const Playhead = styled.span`
  position: absolute;
  top: 0;
  bottom: 0;
  left: 41%;
  width: 1px;
  background: rgba(255, 255, 240, 0.6);
`;

const ZoomRow = styled.div`
  display: flex;
  gap: 6px;
  height: 14px;
  padding-top: 2px;
  background: rgba(255, 255, 255, 0.08);
`;

const ZoomGroup = styled.div`
  display: flex;
  align-items: center;
  gap: 5px;
  width: 50px;
  height: 9px;
  padding-left: 3px;
  color: #c8a010;
  background: rgba(0, 0, 0, 0.06);
`;

const GridValue = styled.span`
  flex: 1;
  color: #e6e6b4;
  text-align: right;
  font-family: "DejaVu Sans", sans-serif;
  font-size: 7px;
  font-weight: 400;
`;

const Dim = styled.span`
  color: rgba(230, 230, 180, 0.4);
`;

const ZoomIcons = styled.div`
  display: flex;
  align-items: center;
  gap: 1px;
  width: 28px;
  height: 9px;
  color: #c8a010;
`;

const EditorPanel = styled.section`
  position: relative;
  color: #c2e0c0;
  background: #2f8545;
`;

const EditorMain = styled.div`
  display: flex;
  height: 188px;
  border: 1px solid #72b87c;
  border-radius: 2px;
  background: #459353;
`;

const EditorStrip = styled.div`
  display: flex;
  flex-direction: column;
  align-items: center;
  gap: 5px;
  width: 13px;
  padding: 4px 0;
  color: #b3a62a;
`;

const ClipList = styled.div`
  display: flex;
  flex-direction: column;
  width: 70px;
  padding: 2px 1px 0;
  background: #18733a;
`;

const ClipListItem = styled.div`
  display: flex;
  align-items: center;
  gap: 3px;
  height: 12px;
  border-left: 3px solid #f9a23a;
  color: #b4dab6;
  background: linear-gradient(90deg, #58a468, #86bf8c 50%, #8cc090);
`;

const ClipListIcon = styled.span`
  ${flexCenter}
  width: 9px;
  height: 9px;
  margin-left: 2px;
  color: #4b9a5b;
  background: #27783f;
`;

const Background = styled.div`
  display: flex;
  flex-direction: column;
  gap: 1px;
  margin: 0 -1px;
  padding: 1px 3px 2px;
  background: #419050;
  ${PickerWrapper} {
    width: 100%;
  }
`;

const EditorCanvas = styled.div`
  flex: 1;
  min-width: 0;
  display: flex;
  flex-direction: column;
  margin: 1px 1px 0 3px;
`;

const EditorTop = styled.div`
  display: flex;
  height: 27px;
`;

const EditorTitle = styled.h2`
  flex: none;
  width: 61px;
  margin: 0;
  padding: 2px;
  font-size: 6px;
  font-weight: 700;
  line-height: 8px;
  color: #cfe8cd;
  background: #338648;
`;

const timeColumns = css`
  flex: 1;
  display: grid;
  grid-template-columns: minmax(0, 19fr) minmax(0, 64fr) minmax(0, 111fr);
`;

// grid lines run outward from the loop so that every section starts on a beat
const beatLines = (p, steps, color) =>
  `repeating-linear-gradient(${p.$flip ? "270deg" : "90deg"}, ${color} 0 1px, transparent 1px calc(100% / ${p.$beats * steps}))`;

const NoteRuler = styled.div`
  ${timeColumns}
`;

const RulerPart = styled.div`
  position: relative;
  display: grid;
  grid-auto-flow: column;
  grid-auto-columns: calc(100% / ${(p) => p.$beats / 4});
  justify-content: start;
  overflow: hidden;
  background: ${(p) => (p.$loop ? "linear-gradient(transparent 10px, #459352 10px 18px, #1f7a3c 18px)," : "linear-gradient(#2b8242 10px, transparent 10px),")}
    ${(p) => beatLines(p, 1, "rgba(110, 180, 110, 0.4)")},
    ${(p) => beatLines(p, 4, "rgba(110, 180, 110, 0.14)")},
    #2b8242;
`;

const BarNumber = styled.span`
  padding: 0 2px;
  height: 10px;
`;

const LoopStart = styled.svg`
  position: absolute;
  left: 0;
  bottom: 1px;
  width: 6px;
  height: 8px;
`;

const LoopEnd = styled(LoopStart)`
  left: auto;
  right: 0;
`;

const EditorNotes = styled.div`
  display: flex;
  height: 90px;
  border-top: 1px solid #5da466;
  border-bottom: 1px solid #4e9a5c;
`;

const keyRows = css`
  display: grid;
  grid-template-rows: minmax(0, 4fr) repeat(11, minmax(0, 7fr)) minmax(0, 4fr);
`;

const Keyboard = styled.div`
  ${keyRows}
  position: relative;
  flex: none;
  width: 61px;
  padding-right: 1px;
  background: #1c7439;
`;

const KeyTools = styled.span`
  position: absolute;
  top: 2px;
  left: 3px;
  display: flex;
  gap: 2px;
`;

const KeyRow = styled.div`
  display: flex;
  overflow: hidden;
  color: ${(p) => (p.$c ? "#cfe8cd" : "#7fbd87")};
  line-height: 7px;
`;

const KeyLabel = styled.span`
  flex: 1;
  padding-right: 1px;
  text-align: right;
  border-bottom: 1px solid #4b9a5b;
`;

const PianoKey = styled.span`
  width: 31px;
  background: #b4d6b8;
`;

const BlackKey = styled.span`
  display: block;
  width: 20px;
  height: 7px;
  background: linear-gradient(90deg, #146a35, #2a7c45);
`;

const NoteGrid = styled.div`
  ${timeColumns}
  position: relative;
  background: #8fbf90;
`;

const Stripes = styled.div`
  ${keyRows}
  position: absolute;
  inset: 0;
`;

const Stripe = styled.span`
  background: ${(p) => (p.$dark ? "rgba(70, 140, 70, 0.14)" : "transparent")};
`;

const GridPart = styled.div`
  ${keyRows}
  position: relative;
  background:
    ${(p) => beatLines(p, 1, "rgba(60, 130, 70, 0.35)")},
    ${(p) => beatLines(p, 4, "rgba(60, 130, 70, 0.14)")},
    ${(p) => (p.$loop ? "rgba(220, 235, 220, 0.42)" : "transparent")};
`;

const NoteRow = styled.div`
  display: grid;
  grid-template-columns: repeat(16, minmax(0, 1fr));
`;

const Note = styled.span`
  width: 7px;
  height: 7px;
  border: 1px solid #b38a34;
  background: #fba136;
`;

const EditorLanes = styled.div`
  display: flex;
  height: 54px;
`;

const LaneTabs = styled.div`
  flex: none;
  display: flex;
  flex-direction: column;
  width: 61px;
`;

const LaneTab = styled.button`
  flex: 1;
  padding-left: 2px;
  border-bottom: 1px solid #2c8143;
  text-align: left;
  color: ${(p) => (p.$active ? "#c9b022" : "#cbe6c9")};
  background: ${(p) => (p.$active ? "#18733a" : "linear-gradient(#459352, #56a063)")};
`;

const VelocityRow = styled.div`
  grid-row: 1 / -1;
  display: grid;
  grid-template-columns: repeat(16, minmax(0, 1fr));
  align-items: start;
  padding-top: 13px;
`;

const Velocity = styled.span`
  width: 4px;
  height: 4px;
  border: 1px solid #86802e;
  background: #f2a844;
`;

const EditorFooter = styled.div`
  display: flex;
  align-items: center;
  gap: 10px;
  height: 17px;
  margin-left: 6px;
  padding-left: 7px;
  color: #dff0dc;
`;

const BrowserColumn = styled.aside`
  position: relative;
  flex: none;
  display: flex;
  flex-direction: column;
  width: 120px;
  color: #b9bce4;
  background: #2d2e86;
`;

const BrowserHeader = styled.div`
  height: 27px;
  padding: 3px 3px 0;
  border: 1px solid #4a4b9a;
  font-size: 6px;
  font-weight: 700;
  background: #494994;
`;

const BrowserTabs = styled.div`
  display: flex;
  justify-content: space-between;
  padding: 1px 0;
`;

const BrowserTab = styled.button`
  ${flexCenter}
  width: 14px;
  height: 11px;
  color: ${(p) => (p.$active ? "#df6a80" : "#c9cbea")};
  background: ${(p) => (p.$active ? "#2b2c7e" : "none")};
`;

const Tree = styled.ul`
  flex: 0 0 190px;
  margin: 0 1px;
  padding: 3px 4px;
  border: 1px solid #4647a0;
  list-style: none;
  background: #171d75;
`;

const TreeItem = styled.li`
  display: flex;
  align-items: center;
  gap: 3px;
  height: 10px;
  padding-left: ${(p) => (p.$deep ? 4 : 1)}px;
  border: 1px solid ${(p) => (p.$selected ? "#7b7cc0" : "transparent")};
  color: ${(p) => (p.$selected ? "#1d217c" : "inherit")};
  background: ${(p) => (p.$selected ? "#5b5da8" : "none")};
`;

const TreeArrow = styled.span`
  width: 4px;
  color: #6f78b8;
`;

const Results = styled.div`
  flex: 1;
  margin: 0 1px;
  border: 1px solid #4647a0;
  background: #171d75;
`;

const MetaPanel = styled.div`
  height: 26px;
  margin: 0 1px;
  padding: 4px 4px 0;
  border: 1px solid #4647a0;
  white-space: nowrap;
  color: #d6d8f2;
  background: #1b2079;
`;

const MetaIcons = styled.div`
  display: flex;
  align-items: center;
  gap: 5px;
  height: 9px;
  padding-right: 8px;
  color: #6a6db4;
`;

const BrowserFooter = styled.div`
  display: flex;
  align-items: center;
  justify-content: flex-end;
  gap: 10px;
  height: 18px;
  padding-right: 6px;
  color: #dcdef4;
`;
